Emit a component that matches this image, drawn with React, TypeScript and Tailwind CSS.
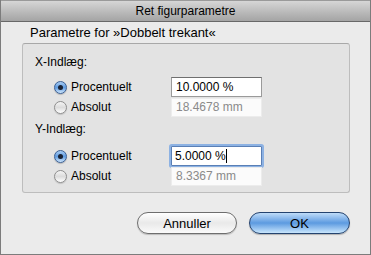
import React from "react";

function Radio({ on }: { on: boolean }) {
  return on ? (
    <div className="w-[13px] h-[13px] rounded-full border border-[#3a5f94] bg-gradient-to-b from-[#a9cdf3] via-[#5f9be0] to-[#cfe6fb] flex items-center justify-center shadow-[0_1px_1px_rgba(0,0,0,0.2)]">
      <div className="w-[5px] h-[5px] rounded-full bg-[#1a2233]" />
    </div>
  ) : (
    <div className="w-[13px] h-[13px] rounded-full border border-[#8e8e8e] bg-gradient-to-b from-[#f4f4f4] via-[#dcdcdc] to-[#ffffff] shadow-[0_1px_1px_rgba(0,0,0,0.15)]" />
  );
}

function Row({
  on,
  label,
  children,
}: {
  on: boolean;
  label: string;
  children: React.ReactNode;
}) {
  return (
    <div className="h-[20px] flex items-center">
      <div className="w-[31px]" />
      <Radio on={on} />
      <div className="w-[104px] pl-[4px] text-[12px] text-black leading-none">{label}</div>
      {children}
    </div>
  );
}

export default function App() {
  return (
    <div
      className="w-[371px] h-[255px] bg-[#ebebeb] border-l border-r border-b border-[#7c7c7c] flex flex-col"
      style={{ fontFamily: '"Liberation Sans", Arial, sans-serif' }}
    >
      <div className="h-[22px] shrink-0 border-t border-[#9a9a9a] border-b border-b-[#686868] bg-gradient-to-b from-[#d6d6d6] to-[#a4a4a4] flex items-center justify-center text-[12px] text-black leading-none">
        Ret figurparametre
      </div>
      <div className="h-[21px] flex items-center pl-[29px] text-[13px] text-black leading-none">
        Parametre for »Dobbelt trekant«
      </div>
      <div className="ml-[21px] mr-[20px] h-[150px] rounded-[3px] border border-[#bdbdbd] border-t-[#a8a8a8] bg-[#e3e3e3] flex flex-col pt-[9px]">
        <div className="h-[18px] flex items-center pl-[12px] text-[12px] text-black leading-none">X-Indlæg:</div>
        <div className="h-[6px]" />
        <Row on={true} label="Procentuelt">
          <div className="w-[91px] h-[20px] bg-white border border-[#9a9a9a] border-t-[#6f6f6f] flex items-center pl-[4px] text-[12px] text-black leading-none">
            10.0000 %
          </div>
        </Row>
        <Row on={false} label="Absolut">
          <div className="w-[91px] h-[19px] bg-[#fbfbfb] border border-[#ececec] flex items-center pl-[4px] text-[12px] text-[#8a8a8a] leading-none">
            18.4678 mm
          </div>
        </Row>
        <div className="h-[3px]" />
        <div className="h-[18px] flex items-center pl-[12px] text-[12px] text-black leading-none">Y-Indlæg:</div>
        <div className="h-[8px]" />
        <Row on={true} label="Procentuelt">
          <div className="w-[91px] h-[20px] bg-white border border-[#5a7fb5] shadow-[0_0_0_2px_#8db2e3] rounded-[1px] flex items-center pl-[3px] text-[12px] text-black leading-none">
            5.0000 %<span className="inline-block w-[1px] h-[14px] bg-black" />
          </div>
        </Row>
        <Row on={false} label="Absolut">
          <div className="w-[91px] h-[19px] bg-[#fbfbfb] border border-[#ececec] flex items-center pl-[4px] text-[12px] text-[#8a8a8a] leading-none">
            8.3367 mm
          </div>
        </Row>
      </div>
      <div className="flex justify-end gap-[12px] pr-[20px] pt-[19px]">
        <div className="w-[100px] h-[22px] rounded-full border border-[#6e6e6e] bg-gradient-to-b from-[#ffffff] via-[#e9e9e9] to-[#fafafa] flex items-center justify-center text-[13px] text-black leading-none shadow-[0_1px_1px_rgba(0,0,0,0.2)]">
          Annuller
        </div>
        <div className="w-[101px] h-[22px] rounded-full border border-[#24436f] bg-gradient-to-b from-[#bfdcf8] via-[#5c9ae0] to-[#c9e6fc] flex items-center justify-center text-[13px] text-black leading-none shadow-[0_1px_1px_rgba(0,0,0,0.25)]">
          OK
        </div>
      </div>
    </div>
  );
}
